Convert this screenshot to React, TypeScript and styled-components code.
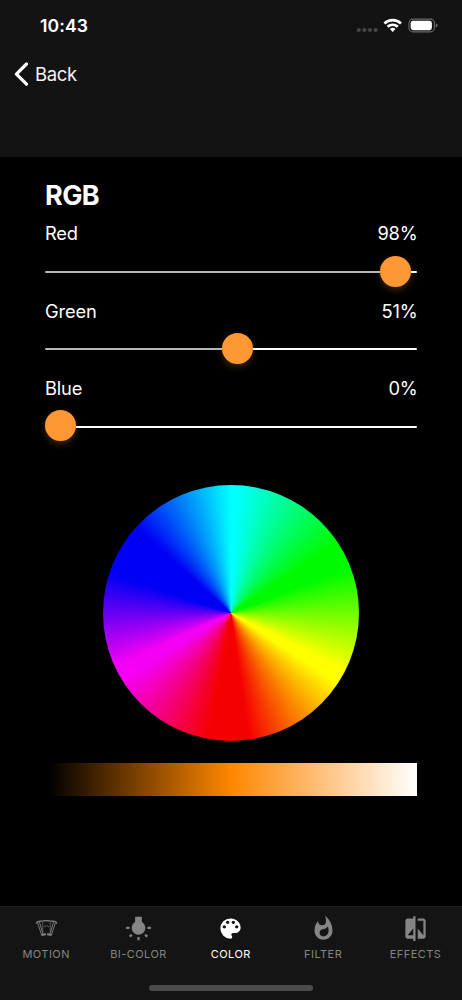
import React from 'react';
import styled, { createGlobalStyle } from 'styled-components';
import { MdWbIncandescent, MdColorLens, MdWhatshot, MdCompare } from 'react-icons/md';

const GlobalStyle = createGlobalStyle`
  * { box-sizing: border-box; }
  body { margin: 0; background: #000; font-family: Inter, "Liberation Sans", sans-serif; color: #fff; }
`;

const Screen = styled.div`
  width: 462px;
  height: 1000px;
  display: flex;
  flex-direction: column;
  background: #000;
  overflow: hidden;
`;

const Header = styled.header`
  height: 157px;
  flex: none;
  background: #131313;
`;

const StatusBar = styled.div`
  height: 52px;
  display: flex;
  align-items: center;
  justify-content: space-between;
  padding: 0 23px 0 40px;
`;

const Clock = styled.div`
  font-size: 17.6px;
  font-weight: 600;
  letter-spacing: 0.1px;
  line-height: 20px;
`;

const StatusIcons = styled.svg`
  display: block;
`;

const BackButton = styled.button`
  display: flex;
  align-items: center;
  gap: 6px;
  height: 44px;
  padding: 0 0 0 14px;
  border: 0;
  background: none;
  color: #f4f4f4;
  font: 390 18.5px/24px Inter, sans-serif;
  letter-spacing: -0.35px;
`;

const Content = styled.main`
  flex: 1;
  padding: 23px 45px 0;
`;

const Title = styled.h1`
  margin: 0;
  font-size: 27px;
  line-height: 32px;
  font-weight: 700;
  letter-spacing: -0.6px;
`;

const Channel = styled.section`
  height: 77.3px;
  padding-top: 9.4px;
`;

const ChannelHeader = styled.div`
  display: flex;
  justify-content: space-between;
  margin-right: -0.6px;
  font-size: 18.3px;
  line-height: 24px;
  font-weight: 370;
  letter-spacing: -0.15px;
`;

const Slider = styled.div`
  height: 31px;
  margin: 10.2px 0 0 -0.5px;
  display: flex;
  align-items: center;
`;

const Track = styled.div`
  height: 2px;
  margin-top: 2px;
`;

const Rest = styled(Track)`
  flex: 1;
  border-radius: 0 1px 1px 0;
  background: #fff;
`;

const Passed = styled(Track)`
  flex: none;
  border-radius: 1px 0 0 1px;
  background: #b8b8b8;
`;

const Thumb = styled.div`
  flex: none;
  width: 31px;
  height: 31px;
  border-radius: 50%;
  background: #fd9834;
  box-shadow: 0 3px 7px rgba(253, 152, 52, 0.25);
`;

const Wheel = styled.div`
  width: 256px;
  height: 256px;
  margin: 41px auto 0;
  border-radius: 50%;
  background: conic-gradient(
    #00ffff 0deg, #00ffff 3deg, #00fb00 57deg, #00fb00 69deg,
    #ffff00 117deg, #ffff00 123deg, #f50000 172deg, #f50000 190deg,
    #f400f4 238deg, #f400f4 245deg, #0000f4 288deg, #0000f4 312deg, #00ffff 360deg
  );
`;

const Brightness = styled.div`
  height: 33px;
  margin-top: 22px;
  background: linear-gradient(90deg, #000 1%, #ff8600 50%, #fff 100%);
`;

const TabBar = styled.nav`
  height: 94px;
  flex: none;
  background: #141414;
  border-top: 1px solid #202020;
  display: flex;
  flex-direction: column;
  align-items: center;
`;

const Tabs = styled.div`
  display: flex;
  width: 100%;
  height: 78px;
  padding-right: 0.4px;
`;

const Tab = styled.div<{ $active?: boolean }>`
  flex: 1;
  display: flex;
  flex-direction: column;
  align-items: center;
  padding-top: 8px;
  gap: 4px;
  color: ${(p) => (p.$active ? '#fff' : '#858585')};
  font-size: 11px;
  line-height: 16px;
  font-weight: 430;
  letter-spacing: 0.45px;

  svg { display: block; flex: none; }
`;

const HomeIndicator = styled.div`
  width: 164px;
  height: 6px;
  border-radius: 3px;
  background: #4b4b4b;
`;

const MotionIcon = () => (
  <svg width="27" height="27" viewBox="0 0 26 26" fill="none" stroke="currentColor">
    <path d="M3 8.3 Q3.6 6.3 5.5 6.1 L10 5.7 Q13 5.2 16 5.7 L20.5 6.1 Q22.4 6.3 23 8.3" strokeWidth="1.3" />
    <path d="M4.3 7.2 L8.2 19 M6.2 6.7 L9.5 18 M21.7 7.2 L17.8 19 M19.8 6.7 L16.5 18" strokeWidth="0.85" />
    <path d="M9.4 6.5 V17 M16.6 6.5 V17 M10.5 11.5 Q13 9 15.5 11.5" strokeWidth="0.6" />
    <path d="M8 19.2 L12.3 18.4 M13.7 18.4 L18 19.2" strokeWidth="2" />
  </svg>
);

const channels = [
  { name: 'Red', value: '98%', offset: 335 },
  { name: 'Green', value: '51%', offset: 177 },
  { name: 'Blue', value: '0%', offset: 0 },
];

const tabs = [
  { label: 'MOTION', icon: <MotionIcon /> },
  { label: 'BI-COLOR', icon: <MdWbIncandescent size={27} /> },
  { label: 'COLOR', icon: <MdColorLens size={27} />, active: true },
  { label: 'FILTER', icon: <MdWhatshot size={27} /> },
  { label: 'EFFECTS', icon: <MdCompare size={27} /> },
];

export default function App() {
  return (
    <Screen>
      <GlobalStyle />
      <Header>
        <StatusBar>
          <Clock>10:43</Clock>
          <StatusIcons width="83" height="18" viewBox="0 0 83 18">
            <g fill="#454545">
              <circle cx="2.8" cy="13" r="2.1" />
              <circle cx="8.4" cy="13" r="2.1" />
              <circle cx="14" cy="13" r="2.1" />
              <circle cx="19.6" cy="13" r="2.1" />
            </g>
            <g fill="none" stroke="#fff" strokeWidth="2.6">
              <path d="M28.4 6.5 A12 12 0 0 1 45 6.5" />
              <path d="M31.6 9.8 A7.4 7.4 0 0 1 41.8 9.8" />
            </g>
            <path d="M33.9 12.1 A4.2 4.2 0 0 1 39.5 12.1 L36.7 15 Z" fill="#fff" />
            <rect x="53" y="2.1" width="25.4" height="12.8" rx="4" fill="none" stroke="#6b6b6b" strokeWidth="1.1" />
            <rect x="54.7" y="3.8" width="21.2" height="9.4" rx="2.4" fill="#fff" />
            <path d="M79.8 6.3 Q81.6 7 81.6 8.5 T79.8 10.7 Z" fill="#6b6b6b" />
          </StatusIcons>
        </StatusBar>
        <BackButton>
          <svg width="15" height="26" viewBox="0 0 15 26" fill="none" stroke="#fff" strokeWidth="3.2" strokeLinecap="round" strokeLinejoin="round">
            <path d="M12.5 3 L2.4 13.1 L12.5 23.2" />
          </svg>
          Back
        </BackButton>
      </Header>
      <Content>
        <Title>RGB</Title>
        {channels.map((c) => (
          <Channel key={c.name}>
            <ChannelHeader>
              <span>{c.name}</span>
              <span>{c.value}</span>
            </ChannelHeader>
            <Slider>
              <Passed style={{ width: c.offset }} />
              <Thumb />
              <Rest />
            </Slider>
          </Channel>
        ))}
        <Wheel />
        <Brightness />
      </Content>
      <TabBar>
        <Tabs>
          {tabs.map((t) => (
            <Tab key={t.label} $active={t.active}>
              {t.icon}
              {t.label}
            </Tab>
          ))}
        </Tabs>
        <HomeIndicator />
      </TabBar>
    </Screen>
  );
}
